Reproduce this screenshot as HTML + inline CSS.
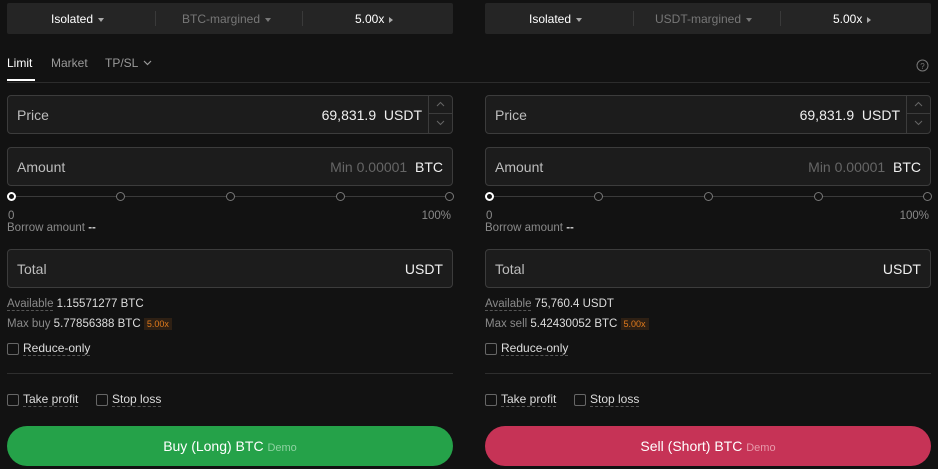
<!DOCTYPE html>
<html><head><meta charset="utf-8"><style>
*{box-sizing:border-box;margin:0;padding:0}
body{width:938px;height:469px;background:#121212;font-family:"Liberation Sans",sans-serif;color:#e8e8e8;position:relative;overflow:hidden}
.a{position:absolute}
.p{position:absolute;top:0;width:446px;height:469px}
.top{position:absolute;left:0;top:3px;width:446px;height:31px;background:#252525;border-radius:2px;font-size:12px}
.top span{position:absolute;top:9px}
.sep{position:absolute;top:8px;width:1px;height:15px;background:#3a3a3a}
.box{position:absolute;left:0;width:446px;height:39px;background:#1c1c1c;border:1px solid #3c3c3c;border-radius:4px;font-size:14px}
.box .l{position:absolute;left:9px;top:11px;color:#bdbdbd}
.box .r{position:absolute;top:11px;color:#f0f0f0}
.sm{font-size:11.5px;color:#8a8a8a}
.dl{border-bottom:1px dashed #555}
.cb{position:absolute;width:12px;height:12px;border:1px solid #666;border-radius:2px}
.dot{position:absolute;top:192px;width:9px;height:9px;border:1px solid #777;border-radius:50%;background:#121212}
.btn{position:absolute;left:0;top:426px;width:446px;height:40px;border-radius:20px;font-size:14px;text-align:center;line-height:40px;color:#fff}
.tri{display:inline-block;width:0;height:0;border-left:3.5px solid transparent;border-right:3.5px solid transparent;border-top:4px solid currentColor;vertical-align:middle;margin-left:5px}
.trr{display:inline-block;width:0;height:0;border-top:3.5px solid transparent;border-bottom:3.5px solid transparent;border-left:4px solid currentColor;vertical-align:middle;margin-left:5px}
</style></head><body>
<div class="a" style="left:7px;top:82px;width:923px;height:1px;background:#2c2c2c"></div>
<div class="a" style="left:7px;top:56px;font-size:12px;color:#fff">Limit</div>
<div class="a" style="left:7px;top:79px;width:28px;height:2px;background:#fff"></div>
<div class="a" style="left:51px;top:56px;font-size:12px;color:#9a9a9a">Market</div>
<div class="a" style="left:105px;top:56px;font-size:12px;color:#9a9a9a">TP/SL</div>
<svg class="a" style="left:143px;top:60px" width="9" height="6"><path d="M1 1l3.5 3.5L8 1" fill="none" stroke="#9a9a9a" stroke-width="1.2"/></svg>
<svg class="a" style="left:916px;top:59px" width="13" height="13"><circle cx="6.5" cy="6.5" r="5.5" fill="none" stroke="#777"/><text x="6.5" y="10" font-size="8" fill="#777" text-anchor="middle" font-family="Liberation Sans">?</text></svg>

<div class="p" style="left:7px">
 <div class="top"><span style="left:44px;color:#fff">Isolated<i class="tri" style="color:#aaa"></i></span><div class="sep" style="left:148px"></div><span style="left:175px;color:#777">BTC-margined<i class="tri"></i></span><div class="sep" style="left:295px"></div><span style="left:348px;color:#fff">5.00x<i class="trr" style="color:#aaa"></i></span></div>
 <div class="box" style="top:95px"><span class="l">Price</span><span class="r" style="right:30px">69,831.9&nbsp; USDT</span><div class="a" style="right:0;top:0;width:24px;height:37px;border-left:1px solid #3c3c3c"><div style="height:18px;border-bottom:1px solid #3c3c3c"><svg width="23" height="17"><path d="M8 10l3.5-3.5L15 10" fill="none" stroke="#666"/></svg></div><svg width="23" height="18"><path d="M8 7l3.5 3.5L15 7" fill="none" stroke="#666"/></svg></div></div>
 <div class="box" style="top:147px"><span class="l">Amount</span><span class="r" style="right:9px"><span style="color:#666">Min 0.00001</span>&nbsp; BTC</span></div>
 <div class="a" style="left:4px;top:196px;width:438px;height:1px;background:#3a3a3a"></div>
 <div class="dot" style="left:0;border:2px solid #fff"></div><div class="dot" style="left:109px"></div><div class="dot" style="left:219px"></div><div class="dot" style="left:329px"></div><div class="dot" style="left:438px"></div>
 <div class="a sm" style="left:1px;top:210px">0</div><div class="a sm" style="right:2px;top:210px">100%</div>
 <div class="a sm" style="left:0;top:222px">Borrow amount <b style="color:#ccc">--</b></div>
 <div class="box" style="top:249px"><span class="l">Total</span><span class="r" style="right:9px">USDT</span></div>
 <div class="a sm" style="left:0;top:298px"><span class="dl">Available</span> <span style="color:#ddd">1.15571277 BTC</span></div>
 <div class="a sm" style="left:0;top:318px">Max buy <span style="color:#ddd">5.77856388 BTC</span> <span style="background:#2e2014;color:#e07a1c;font-size:9px;padding:1px 3px">5.00x</span></div>
 <div class="cb" style="left:0;top:343px"></div><div class="a dl" style="left:16px;top:341px;font-size:12px;color:#ddd">Reduce-only</div>
 <div class="a" style="left:0;top:373px;width:446px;height:1px;background:#2e2e2e"></div>
 <div class="cb" style="left:0;top:394px"></div><div class="a dl" style="left:16px;top:392px;font-size:12px;color:#ddd">Take profit</div>
 <div class="cb" style="left:89px;top:394px"></div><div class="a dl" style="left:105px;top:392px;font-size:12px;color:#ddd">Stop loss</div>
 <div class="btn" style="background:#25a249">Buy (Long) BTC <span style="font-size:11px;color:#8fd3a2">Demo</span></div>
</div>

<div class="p" style="left:485px">
 <div class="top"><span style="left:44px;color:#fff">Isolated<i class="tri" style="color:#aaa"></i></span><div class="sep" style="left:148px"></div><span style="left:170px;color:#777">USDT-margined<i class="tri"></i></span><div class="sep" style="left:295px"></div><span style="left:348px;color:#fff">5.00x<i class="trr" style="color:#aaa"></i></span></div>
 <div class="box" style="top:95px"><span class="l">Price</span><span class="r" style="right:30px">69,831.9&nbsp; USDT</span><div class="a" style="right:0;top:0;width:24px;height:37px;border-left:1px solid #3c3c3c"><div style="height:18px;border-bottom:1px solid #3c3c3c"><svg width="23" height="17"><path d="M8 10l3.5-3.5L15 10" fill="none" stroke="#666"/></svg></div><svg width="23" height="18"><path d="M8 7l3.5 3.5L15 7" fill="none" stroke="#666"/></svg></div></div>
 <div class="box" style="top:147px"><span class="l">Amount</span><span class="r" style="right:9px"><span style="color:#666">Min 0.00001</span>&nbsp; BTC</span></div>
 <div class="a" style="left:4px;top:196px;width:438px;height:1px;background:#3a3a3a"></div>
 <div class="dot" style="left:0;border:2px solid #fff"></div><div class="dot" style="left:109px"></div><div class="dot" style="left:219px"></div><div class="dot" style="left:329px"></div><div class="dot" style="left:438px"></div>
 <div class="a sm" style="left:1px;top:210px">0</div><div class="a sm" style="right:2px;top:210px">100%</div>
 <div class="a sm" style="left:0;top:222px">Borrow amount <b style="color:#ccc">--</b></div>
 <div class="box" style="top:249px"><span class="l">Total</span><span class="r" style="right:9px">USDT</span></div>
 <div class="a sm" style="left:0;top:298px"><span class="dl">Available</span> <span style="color:#ddd">75,760.4 USDT</span></div>
 <div class="a sm" style="left:0;top:318px">Max sell <span style="color:#ddd">5.42430052 BTC</span> <span style="background:#2e2014;color:#e07a1c;font-size:9px;padding:1px 3px">5.00x</span></div>
 <div class="cb" style="left:0;top:343px"></div><div class="a dl" style="left:16px;top:341px;font-size:12px;color:#ddd">Reduce-only</div>
 <div class="a" style="left:0;top:373px;width:446px;height:1px;background:#2e2e2e"></div>
 <div class="cb" style="left:0;top:394px"></div><div class="a dl" style="left:16px;top:392px;font-size:12px;color:#ddd">Take profit</div>
 <div class="cb" style="left:89px;top:394px"></div><div class="a dl" style="left:105px;top:392px;font-size:12px;color:#ddd">Stop loss</div>
 <div class="btn" style="background:#c63356">Sell (Short) BTC <span style="font-size:11px;color:#e79aab">Demo</span></div>
</div>
</body></html>
